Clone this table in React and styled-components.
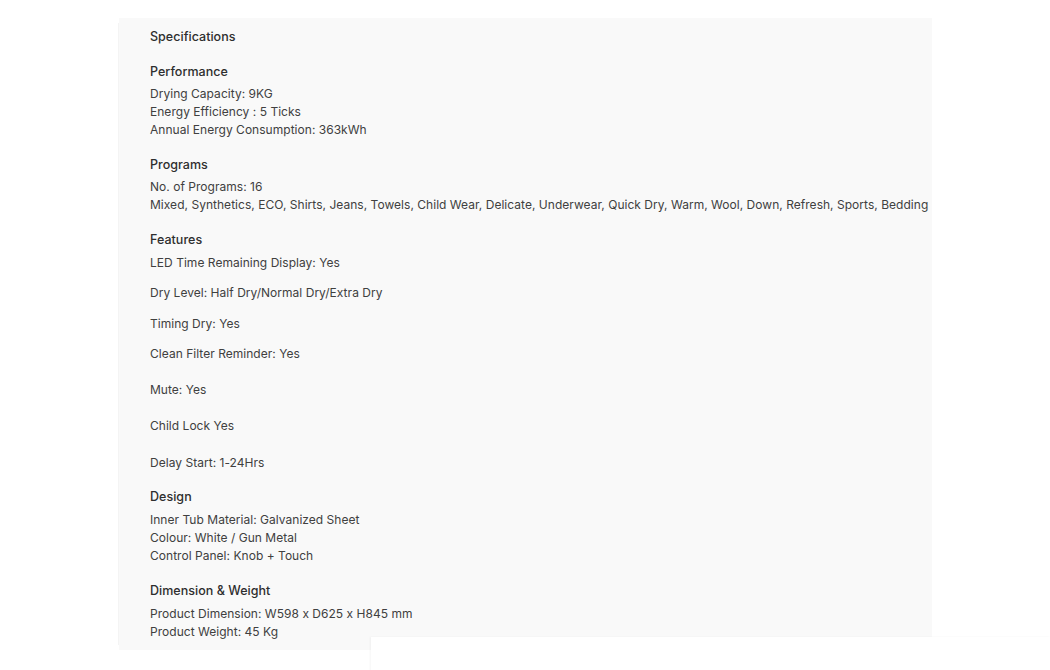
import React from "react";
import styled, { createGlobalStyle } from "styled-components";

const GlobalStyle = createGlobalStyle`
  body {
    margin: 0;
    background: #ffffff;
    font-family: Inter, "Noto Sans", sans-serif;
  }
`;

const Page = styled.div`
  width: 1050px;
  height: 670px;
  overflow: hidden;
  padding: 18px 0 0 119px;
  box-sizing: border-box;
`;

const Panel = styled.div`
  width: 813px;
  height: 632px;
  box-sizing: border-box;
  background-color: #f9f9f9;
  padding: 11px 0 0 31px;
  color: #404040;
  font-size: 12px;
  letter-spacing: 0.03px;
  box-shadow: -6px 0 0 -5px #f4f4f4;
`;

const Title = styled.div`
  font-size: 12.5px;
  font-weight: 500;
  color: #2e2e2e;
  line-height: 16px;
  margin-bottom: 19px;
`;

const Group = styled.div`
  margin-bottom: ${(props) => props.$gap}px;
`;

const GroupTitle = styled.div`
  font-size: 12.5px;
  font-weight: 500;
  color: #2e2e2e;
  line-height: 16px;
  margin-bottom: ${(props) => props.$space}px;
`;

const Line = styled.div`
  line-height: 18px;
  white-space: nowrap;
  margin-bottom: ${(props) => props.$after || 0}px;
`;

const Cover = styled.div`
  position: relative;
  margin: -13px 0 0 252px;
  height: 40px;
  background: #ffffff;
  box-shadow: -1px 0 2px rgba(0, 0, 0, 0.04);
`;

const specs = [
  {
    title: "Performance",
    space: 5,
    gap: 18,
    lines: [
      "Drying Capacity: 9KG",
      "Energy Efficiency : 5 Ticks",
      "Annual Energy Consumption: 363kWh",
    ],
  },
  {
    title: "Programs",
    space: 5,
    gap: 18,
    lines: [
      "No. of Programs: 16",
      "Mixed, Synthetics, ECO, Shirts, Jeans, Towels, Child Wear, Delicate, Underwear, Quick Dry, Warm, Wool, Down, Refresh, Sports, Bedding",
    ],
  },
  {
    title: "Features",
    space: 6,
    gap: 17,
    lines: [
      ["LED Time Remaining Display: Yes", 12],
      ["Dry Level: Half Dry/Normal Dry/Extra Dry", 13],
      ["Timing Dry: Yes", 12],
      ["Clean Filter Reminder: Yes", 18],
      ["Mute: Yes", 18],
      ["Child Lock Yes", 19],
      ["Delay Start: 1-24Hrs", 0],
    ],
  },
  {
    title: "Design",
    space: 6,
    gap: 18,
    lines: [
      "Inner Tub Material: Galvanized Sheet",
      "Colour: White / Gun Metal",
      "Control Panel: Knob + Touch",
    ],
  },
  {
    title: "Dimension & Weight",
    space: 6,
    gap: 0,
    lines: ["Product Dimension: W598 x D625 x H845 mm", "Product Weight: 45 Kg"],
  },
];

const App = () => {
  return (
    <>
      <GlobalStyle />
      <Page>
        <Panel>
          <Title>Specifications</Title>
          {specs.map((group) => (
            <Group key={group.title} $gap={group.gap}>
              <GroupTitle $space={group.space}>{group.title}</GroupTitle>
              {group.lines.map((line) => {
                const [text, after] = Array.isArray(line) ? line : [line, 0];
                return (
                  <Line key={text} $after={after}>
                    {text}
                  </Line>
                );
              })}
            </Group>
          ))}
        </Panel>
        <Cover />
      </Page>
    </>
  );
};

export default App;
